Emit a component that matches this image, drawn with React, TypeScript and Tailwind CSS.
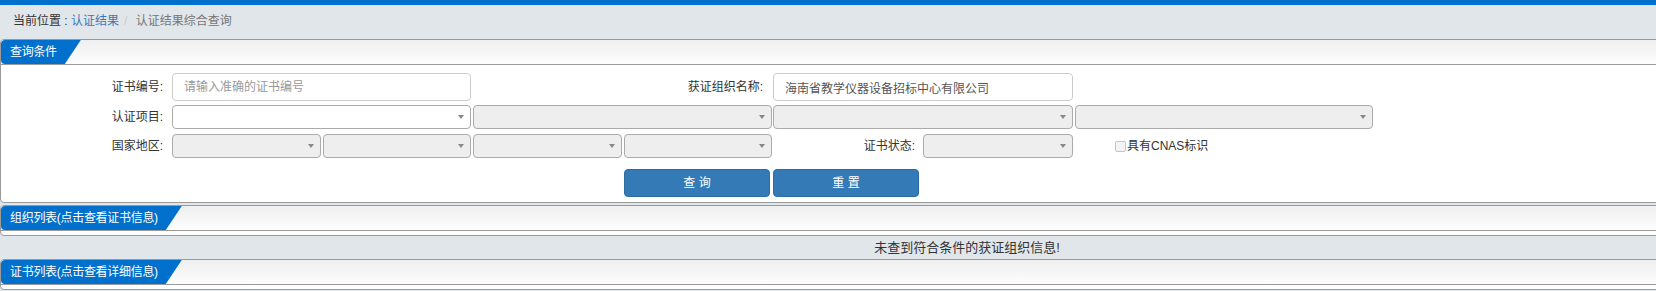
import React from "react";

function PanelHeader({ title }: { title: string }) {
  return (
    <div className="h-[25px] border-b border-[#9a9a9a] bg-linear-to-b from-[#efefef] to-[#fdfdfd] flex">
      <div className="h-full bg-[#0070cc] text-white pl-[9px] pr-[24px] rounded-l-[4px] [clip-path:polygon(0_0,100%_0,calc(100%-16px)_100%,0_100%)] leading-[24px] text-[12px] tracking-[-0.3px] whitespace-nowrap">
        {title}
      </div>
    </div>
  );
}

function Arrow() {
  return <span className="w-0 h-0 border-t-[4px] border-t-[#888] border-x-[3px] border-x-transparent" />;
}

function Sel({ className, white }: { className: string; white?: boolean }) {
  return (
    <div
      className={`${className} h-[24px] border border-[#aaa] rounded-[4px] flex items-center justify-end pr-[6px] ${
        white ? "bg-white" : "bg-[#eee]"
      }`}
    >
      <Arrow />
    </div>
  );
}

const rowGrid = "grid grid-cols-[171px_301px_300px_302px_300px] items-center";
const label = "text-right text-[12px] text-[#333] whitespace-nowrap";

export default function App() {
  return (
    <div className="w-[1656px] h-[291px] overflow-hidden bg-[#e1e6ea] font-[family-name:'Liberation_Sans','Noto_Sans_CJK_SC',sans-serif]">
      <div className="w-[1934px]">
        <div className="h-[5px] bg-[#0070cc]" />
        <div className="h-[34px] pt-[6px] pl-[13px] leading-[20px] text-[12px] whitespace-nowrap">
          <span className="text-[#333]">当前位置 : </span>
          <span className="text-[#3c78b4]">认证结果</span>
          <span className="text-[#ccc] px-[5px]">/&nbsp;</span>
          <span className="text-[#777]">认证结果综合查询</span>
        </div>

        {/* Panel 1 */}
        <div className="border border-[#9a9a9a] rounded-[4px] bg-white overflow-hidden">
          <PanelHeader title="查询条件" />
          <div className="pt-[8px] pb-[5px]">
            <div className={`${rowGrid} h-[28px]`}>
              <div className={`${label} pr-[9px]`}>证书编号:</div>
              <input
                readOnly
                placeholder="请输入准确的证书编号"
                className="w-[299px] h-[28px] border border-[#ccc] rounded-[4px] px-[11px] text-[12px] text-[#555] placeholder:text-[#999] outline-none bg-white"
              />
              <div className={`${label} pr-[10px]`}>获证组织名称:</div>
              <input
                readOnly
                defaultValue="海南省教学仪器设备招标中心有限公司"
                className="w-[300px] h-[28px] border border-[#ccc] rounded-[4px] px-[11px] text-[12px] text-[#555] outline-none bg-white"
              />
              <div />
            </div>

            <div className={`${rowGrid} h-[24px] mt-[4px]`}>
              <div className={`${label} pr-[9px]`}>认证项目:</div>
              <Sel className="w-[299px]" white />
              <Sel className="w-[299px]" />
              <Sel className="w-[300px]" />
              <Sel className="w-[298px]" />
            </div>

            <div className={`${rowGrid} h-[24px] mt-[5px]`}>
              <div className={`${label} pr-[9px]`}>国家地区:</div>
              <div className="flex gap-[2px]">
                <Sel className="w-[149px]" />
                <Sel className="w-[148px]" />
              </div>
              <div className="flex gap-[2px]">
                <Sel className="w-[149px]" />
                <Sel className="w-[148px]" />
              </div>
              <div className="flex items-center w-[300px]">
                <div className={`${label} flex-1 pr-[8px]`}>证书状态:</div>
                <Sel className="w-[150px]" />
              </div>
              <div className="flex items-center pl-[40px] text-[12px] text-[#333]">
                <span className="w-[11px] h-[11px] border border-[#c4c4c4] bg-[#f4f4f4] rounded-[2px] mr-[1px]" />
                <span>具有CNAS标识</span>
              </div>
            </div>

            <div className={`${rowGrid} h-[28px] mt-[11px]`}>
              <div />
              <div />
              <div className="pl-[151px]">
                <div className="w-[146px] h-[28px] bg-[#337ab7] border border-[#2e6da4] rounded-[4px] flex items-center justify-center text-white text-[12px]">
                  查&nbsp;询
                </div>
              </div>
              <div>
                <div className="w-[146px] h-[28px] bg-[#337ab7] border border-[#2e6da4] rounded-[4px] flex items-center justify-center text-white text-[12px]">
                  重&nbsp;置
                </div>
              </div>
              <div />
            </div>
          </div>
        </div>

        {/* Panel 2 */}
        <div className="mt-[2px] border border-[#9a9a9a] rounded-[4px] bg-white overflow-hidden">
          <PanelHeader title="组织列表(点击查看证书信息)" />
          <div className="h-[4px]" />
        </div>

        <div className="h-[23px] leading-[23px] text-center text-[13px] text-[#333]">
          未查到符合条件的获证组织信息!
        </div>

        {/* Panel 3 */}
        <div className="border border-[#9a9a9a] rounded-[4px] bg-white overflow-hidden">
          <PanelHeader title="证书列表(点击查看详细信息)" />
          <div className="h-[4px]" />
        </div>
      </div>
    </div>
  );
}
